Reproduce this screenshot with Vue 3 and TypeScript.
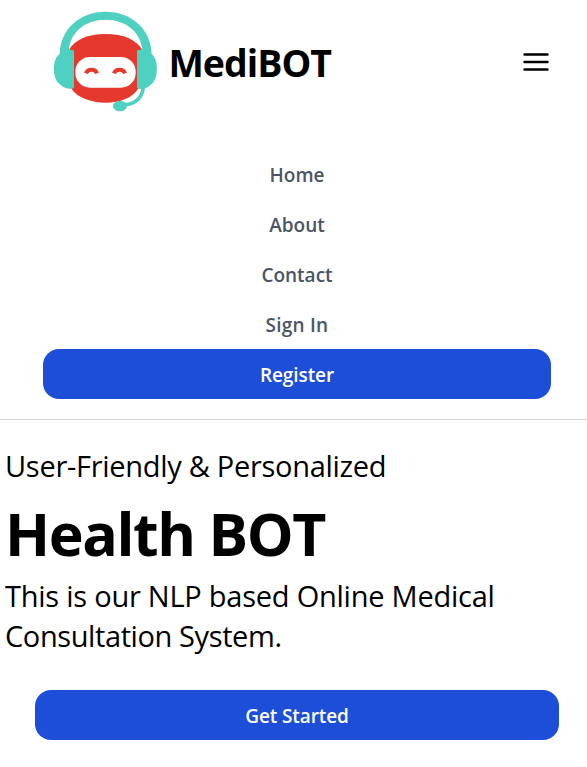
<script setup lang="ts">
interface NavLink {
  label: string
  id: string
}

const links: NavLink[] = [
  { label: 'Home', id: 'home' },
  { label: 'About', id: 'about' },
  { label: 'Contact', id: 'contact' },
  { label: 'Sign In', id: 'signin' },
]
</script>

<template>
  <div class="page">
    <header class="header">
      <div class="topbar">
        <div class="brand">
          <svg class="logo" width="125" height="120" viewBox="0 0 375 360" aria-hidden="true">
            <path d="M72 150C88 119 130 102 182 102S275 119 292 150L279 267C263 293 226 308 182 308S96 292 80 267Z" fill="#e4392c" />
            <rect x="91" y="171" width="181" height="92" rx="44" fill="#fff" />
            <path d="M123 220C128 206 151 206 156 220M207 220C212 206 235 206 240 220" fill="none" stroke="#e4392c" stroke-width="12" />
            <path d="M44 162C46 88 104 35 182 35S318 88 320 162C341 176 341 237 320 252C312 261 297 269 280 266Q276 265 276 260V155Q276 149 282 149H292C287 96 243 59 182 59S76 96 72 149H81Q87 149 87 155V260Q87 266 81 266C66 268 51 260 44 252C21 237 21 176 44 162Z" fill="#4fd1c1" />
            <path d="M295 260C293 293 270 313 240 314" fill="none" stroke="#4fd1c1" stroke-width="11" />
            <ellipse cx="225" cy="318" rx="21" ry="16" fill="#4fd1c1" />
          </svg>
          <span class="name">MediBOT</span>
        </div>
        <button class="menu" type="button" aria-label="Menu">
          <svg width="26" height="20" viewBox="0 0 26 20" fill="none" stroke="#000" stroke-width="2.4" stroke-linecap="round">
            <path d="M1.5 2.5H24.5M1.5 10H24.5M1.5 17.5H24.5" />
          </svg>
        </button>
      </div>
      <nav class="nav">
        <a v-for="link in links" :key="link.id" class="link" :class="link.id">{{ link.label }}</a>
        <a class="button register">Register</a>
      </nav>
    </header>
    <main class="hero">
      <p class="lead tagline">User-Friendly &amp; Personalized</p>
      <h1 class="title">Health BOT</h1>
      <p class="lead about-text"><span class="line first">This is our NLP based Online Medical</span> <span class="line second">Consultation System.</span></p>
      <a class="button start">Get Started</a>
    </main>
  </div>
</template>

<style>
body {
  background: #fff;
}
</style>

<style scoped>
.page {
  min-height: 767px;
  box-sizing: border-box;
  overflow: hidden;
  color: #000;
  font-family: "Segoe UI", "Open Sans", "Noto Sans", sans-serif;
}
.header {
  height: 420px;
  box-sizing: border-box;
  border-bottom: 1px solid #d1d5db;
}
.topbar {
  display: flex;
  justify-content: space-between;
  height: 120px;
  padding: 0 38px 0 45px;
}
.brand {
  display: flex;
}
.logo {
  display: block;
}
.name {
  font-size: 37.5px;
  line-height: 50px;
  font-weight: 700;
  padding-top: 38px;
  margin-left: -1.5px;
  letter-spacing: -1px;
  white-space: nowrap;
}
.menu {
  align-self: flex-start;
  margin-top: 52px;
  padding: 0;
  border: 0;
  background: none;
  line-height: 0;
}
.nav {
  display: flex;
  flex-direction: column;
  padding: 29px 36px 0 43px;
}
.link {
  height: 50px;
  line-height: 52px;
  font-size: 19px;
  font-weight: 600;
  color: #4b5563;
  text-align: center;
}
.signin {
  letter-spacing: 0.25px;
}
.button {
  display: block;
  height: 50px;
  line-height: 53px;
  border-radius: 16px;
  background: #1d4ed8;
  color: #fff;
  font-size: 19px;
  font-weight: 600;
  letter-spacing: -0.1px;
  text-align: center;
}
.hero {
  padding: 26px 5px 0;
}
.lead {
  margin: 0;
  font-size: 29px;
  line-height: 40px;
  font-weight: 400;
  letter-spacing: -0.29px;
  white-space: nowrap;
}
.line {
  display: block;
}
.first {
  letter-spacing: -0.24px;
}
.second {
  letter-spacing: -0.4px;
}
.title {
  margin: 17px 0 13px;
  font-size: 59px;
  line-height: 60px;
  font-weight: 700;
  letter-spacing: -1.4px;
  white-space: nowrap;
}
.start {
  margin: 34px 23px 0 30px;
}
</style>
